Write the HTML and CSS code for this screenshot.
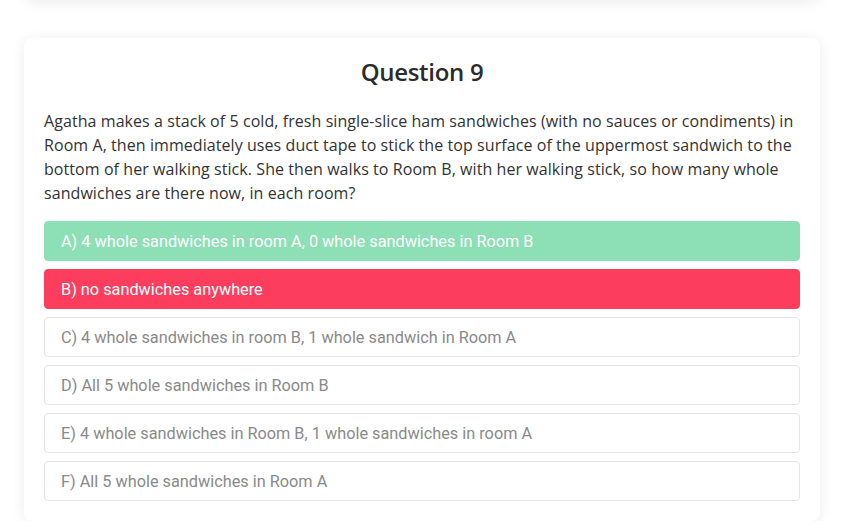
FILE: index.html
```html
<!DOCTYPE html>
<html>
<head>
<meta charset="utf-8">
<link rel="stylesheet" href="styles.css">
</head>
<body>
<div class="page">
  <div class="card prev"></div>
  <div class="card">
    <h2 class="title">Question 9</h2>
    <p class="question">Agatha makes a stack of 5 cold, fresh single-slice ham sandwiches (with no sauces or condiments) in Room A, then immediately uses duct tape to stick the top surface of the uppermost sandwich to the bottom of her walking stick. She then walks to Room B, with her walking stick, so how many whole sandwiches are there now, in each room?</p>
    <div class="options">
      <div class="option correct">A) 4 whole sandwiches in room A, 0 whole sandwiches in Room B</div>
      <div class="option wrong">B) no sandwiches anywhere</div>
      <div class="option">C) 4 whole sandwiches in room B, 1 whole sandwich in Room A</div>
      <div class="option">D) All 5 whole sandwiches in Room B</div>
      <div class="option">E) 4 whole sandwiches in Room B, 1 whole sandwiches in room A</div>
      <div class="option">F) All 5 whole sandwiches in Room A</div>
    </div>
  </div>
</div>
</body>
</html>
```
FILE: styles.css
```css
html, body {
  margin: 0;
  padding: 0;
  background: #ffffff;
  overflow: hidden;
}
.page {
  width: 796px;
  margin-left: 24px;
  margin-top: -200px;
  display: flex;
  flex-direction: column;
  gap: 38px;
}
.card {
  background: #fff;
  border-radius: 8px;
  box-shadow: 0 2px 14px rgba(0, 0, 0, 0.08);
  padding: 20px 20px 20px 20px;
}
.card.prev {
  height: 160px;
}
.title {
  margin: 0;
  text-align: center;
  font-family: "Open Sans", sans-serif;
  font-weight: 600;
  font-size: 24px;
  line-height: 32px;
  letter-spacing: -0.3px;
  color: #2b2b2b;
  padding-top: 0;
  margin-top: -2px;
}
.question {
  margin: 21px 0 16px 0;
  font-family: "Open Sans", sans-serif;
  font-size: 16px;
  line-height: 24px;
  letter-spacing: 0.07px;
  color: #333;
}
.options {
  display: flex;
  flex-direction: column;
  gap: 8px;
}
.option {
  height: 40px;
  box-sizing: border-box;
  border: 1px solid #e6e6e6;
  border-radius: 4px;
  padding: 0 16px;
  display: flex;
  align-items: center;
  font-family: Roboto, sans-serif;
  font-size: 16.3px;
  color: #8a8a8a;
}
.option.correct {
  background: #8ddfb5;
  border-color: #8ddfb5;
  color: #fff;
}
.option.wrong {
  background: #fc3d5e;
  border-color: #fc3d5e;
  color: #fff;
}
```
